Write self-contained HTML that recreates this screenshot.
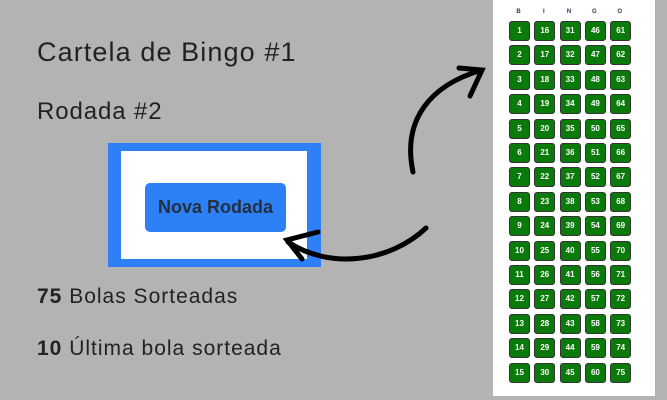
<!DOCTYPE html>
<html><head><style>
body{margin:0;width:667px;height:400px;background:#b3b3b3;position:relative;overflow:hidden;font-family:"Liberation Sans",sans-serif;color:#222}
.t{position:absolute;left:37px;white-space:nowrap}
.box{position:absolute;left:108px;top:143px;width:213px;height:124px;background:#2d80f6}
.in{position:absolute;left:121px;top:151px;width:186px;height:108px;background:#fff}
.btn{position:absolute;left:145px;top:183px;width:141px;height:49px;background:#2d80f6;border-radius:5px;color:#23303f;font-weight:bold;font-size:18px;text-align:center;line-height:49px}
.panel{position:absolute;left:493px;top:0;width:162px;height:396px;background:#fff}
.c{position:absolute;width:19px;height:18px;background:#0a7a0a;border:1px solid #333;border-radius:3px;color:#fff;font-size:8px;font-weight:bold;text-align:center;line-height:18px}
.h{position:absolute;top:9px;font-size:6px;font-weight:bold;color:#335;width:19px;text-align:center}
</style></head><body>
<div class="t" style="top:37px;font-size:27px;letter-spacing:1.1px">Cartela de Bingo #1</div>
<div class="t" style="top:98px;font-size:24px;letter-spacing:0.9px">Rodada #2</div>
<div class="box"></div><div class="in"></div>
<div class="btn">Nova Rodada</div>
<div class="t" style="top:285px;font-size:21px;letter-spacing:1px"><b>75</b> Bolas Sorteadas</div>
<div class="t" style="top:337px;font-size:21px;letter-spacing:1px"><b>10</b> Última bola sorteada</div>
<div class="panel"></div>
<svg style="position:absolute;left:0;top:0" width="667" height="400">
<g fill="none" stroke="#000" stroke-width="5" stroke-linecap="round">
<path d="M413,172 C402,120 430,85 482,70"/>
<path d="M459,68 L482,70 L470,96"/>
<path d="M426,228 C390,262 330,270 288,242"/>
<path d="M318,232 L287,240 L302,259"/>
</g></svg>
<div id="g"></div>
<script>
var g=document.getElementById('g'),L='BINGO',s='';
for(var c=0;c<5;c++){var x=509+c*25.3;s+='<div class="h" style="left:'+x+'px">'+L[c]+'</div>';
for(var r=0;r<15;r++){var y=21+r*24.4;s+='<div class="c" style="left:'+x+'px;top:'+y+'px">'+(c*15+r+1)+'</div>';}}
g.innerHTML=s;
</script>
</body></html>
